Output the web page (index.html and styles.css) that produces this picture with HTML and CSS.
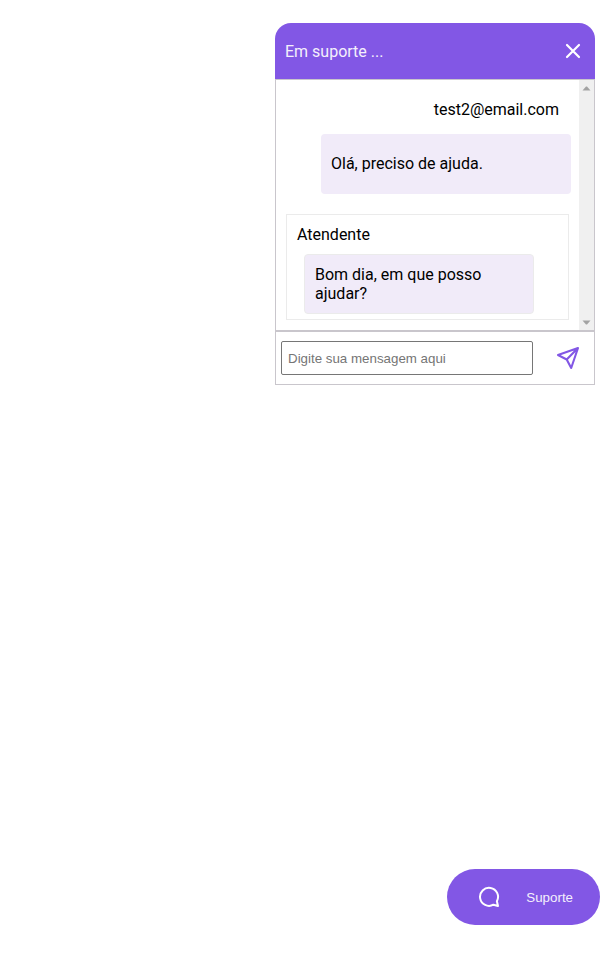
FILE: index.html
```html
<!DOCTYPE html>
<html lang="pt-BR">
<head>
<meta charset="utf-8">
<title>Suporte</title>
<link rel="stylesheet" href="styles.css">
</head>
<body>
<section class="chat">
  <header class="chat-header">
    <span>Em suporte ...</span>
    <svg class="close" width="16" height="16" viewBox="0 0 16 16"><path d="M2 2 14 14M14 2 2 14"/></svg>
  </header>
  <div class="chat-body">
    <div class="messages">
      <div class="client">
        <span class="client-name">test2@email.com</span>
        <div class="bubble client-bubble">Olá, preciso de ajuda.</div>
      </div>
      <div class="admin">
        <span class="admin-name">Atendente</span>
        <div class="bubble admin-bubble">Bom dia, em que posso ajudar?</div>
      </div>
    </div>
    <div class="scrollbar">
      <svg width="9" height="5" viewBox="0 0 9 5"><path d="M.5 4.500 4 .5h1l3.500 4z"/></svg>
      <svg width="9" height="5" viewBox="0 0 9 5"><path d="M.5.5 4 4.500h1L8.500.5z"/></svg>
    </div>
  </div>
  <footer class="chat-footer">
    <input class="message-input" type="text" placeholder="Digite sua mensagem aqui">
    <svg class="send" width="24" height="24" viewBox="0 0 24 24"><path d="M2 9 22 2 15.200 22 10.700 13.500ZM10.700 13.500 22 2"/></svg>
  </footer>
</section>
<button class="support">
  <svg class="balloon" width="22" height="22" viewBox="0 0 22 22"><path d="M18.900 15.200A9 9 0 1 0 15.400 18.700L20 20Z"/></svg>
  <span>Suporte</span>
</button>
</body>
</html>
```
FILE: styles.css
```css
* { box-sizing: border-box; }
body {
  margin: 0;
  height: 955px;
  padding: 23px 10px 30px 0;
  display: flex;
  flex-direction: column;
  justify-content: space-between;
  align-items: flex-end;
  background: #fff;
  color: #000;
  font: 16px/19px Roboto, sans-serif;
  overflow: hidden;
}
.chat { width: 320px; margin-right: 5px; }
.chat-header {
  height: 56px;
  padding: 0 14px 0 10px;
  display: flex;
  align-items: center;
  justify-content: space-between;
  background: #8257e5;
  color: #f4effc;
  border-radius: 16px 16px 0 0;
}
.close { fill: none; stroke: #fff; stroke-width: 2.2; stroke-linecap: round; }
.chat-body {
  height: 252px;
  display: flex;
  border: 1px solid #c9c6cc;
}
.messages { width: 303px; padding: 20px 8px 0 10px; }
.client {
  display: flex;
  flex-direction: column;
  align-items: flex-end;
  margin-bottom: 20px;
}
.client-name { margin: 0 12px 15px 0; }
.bubble {
  height: 60px;
  display: flex;
  align-items: center;
  padding: 10px;
  background: #f1ebf9;
  border-radius: 4px;
}
.client-bubble { width: 250px; padding-bottom: 11px; }
.admin {
  width: 283px;
  height: 106px;
  padding: 10px 10px 5px;
  border: 1px solid #ebebeb;
}
.admin-name { display: block; margin-bottom: 10px; }
.admin-bubble { width: 230px; margin-left: 7px; border: 1px solid #ebebeb; }
.scrollbar {
  width: 15px;
  padding: 6px 0 5px;
  display: flex;
  flex-direction: column;
  align-items: center;
  justify-content: space-between;
  background: #f0f0f0;
}
.scrollbar svg { fill: #a3a3a3; }
.chat-footer {
  height: 54px;
  padding: 0 14px 0 5px;
  display: flex;
  align-items: center;
  justify-content: space-between;
  border: 1px solid #c9c6cc;
}
.message-input {
  width: 252px;
  height: 34px;
  margin: 0;
  padding: 0 6px;
  border: 1px solid #767676;
  border-radius: 2px;
  font: 13.333px "Liberation Sans", sans-serif;
}
.message-input::placeholder { color: #757575; }
.send { fill: none; stroke: #8257e5; stroke-width: 2.1; stroke-linejoin: round; }
.support {
  width: 153px;
  height: 56px;
  padding: 0 27px 0 31px;
  display: flex;
  align-items: center;
  justify-content: space-between;
  border: 0;
  border-radius: 28px;
  background: #8257e5;
  color: #f4effc;
  font: 13.333px "Liberation Sans", sans-serif;
}
.balloon { fill: none; stroke: #fff; stroke-width: 2; stroke-linejoin: round; }
```
